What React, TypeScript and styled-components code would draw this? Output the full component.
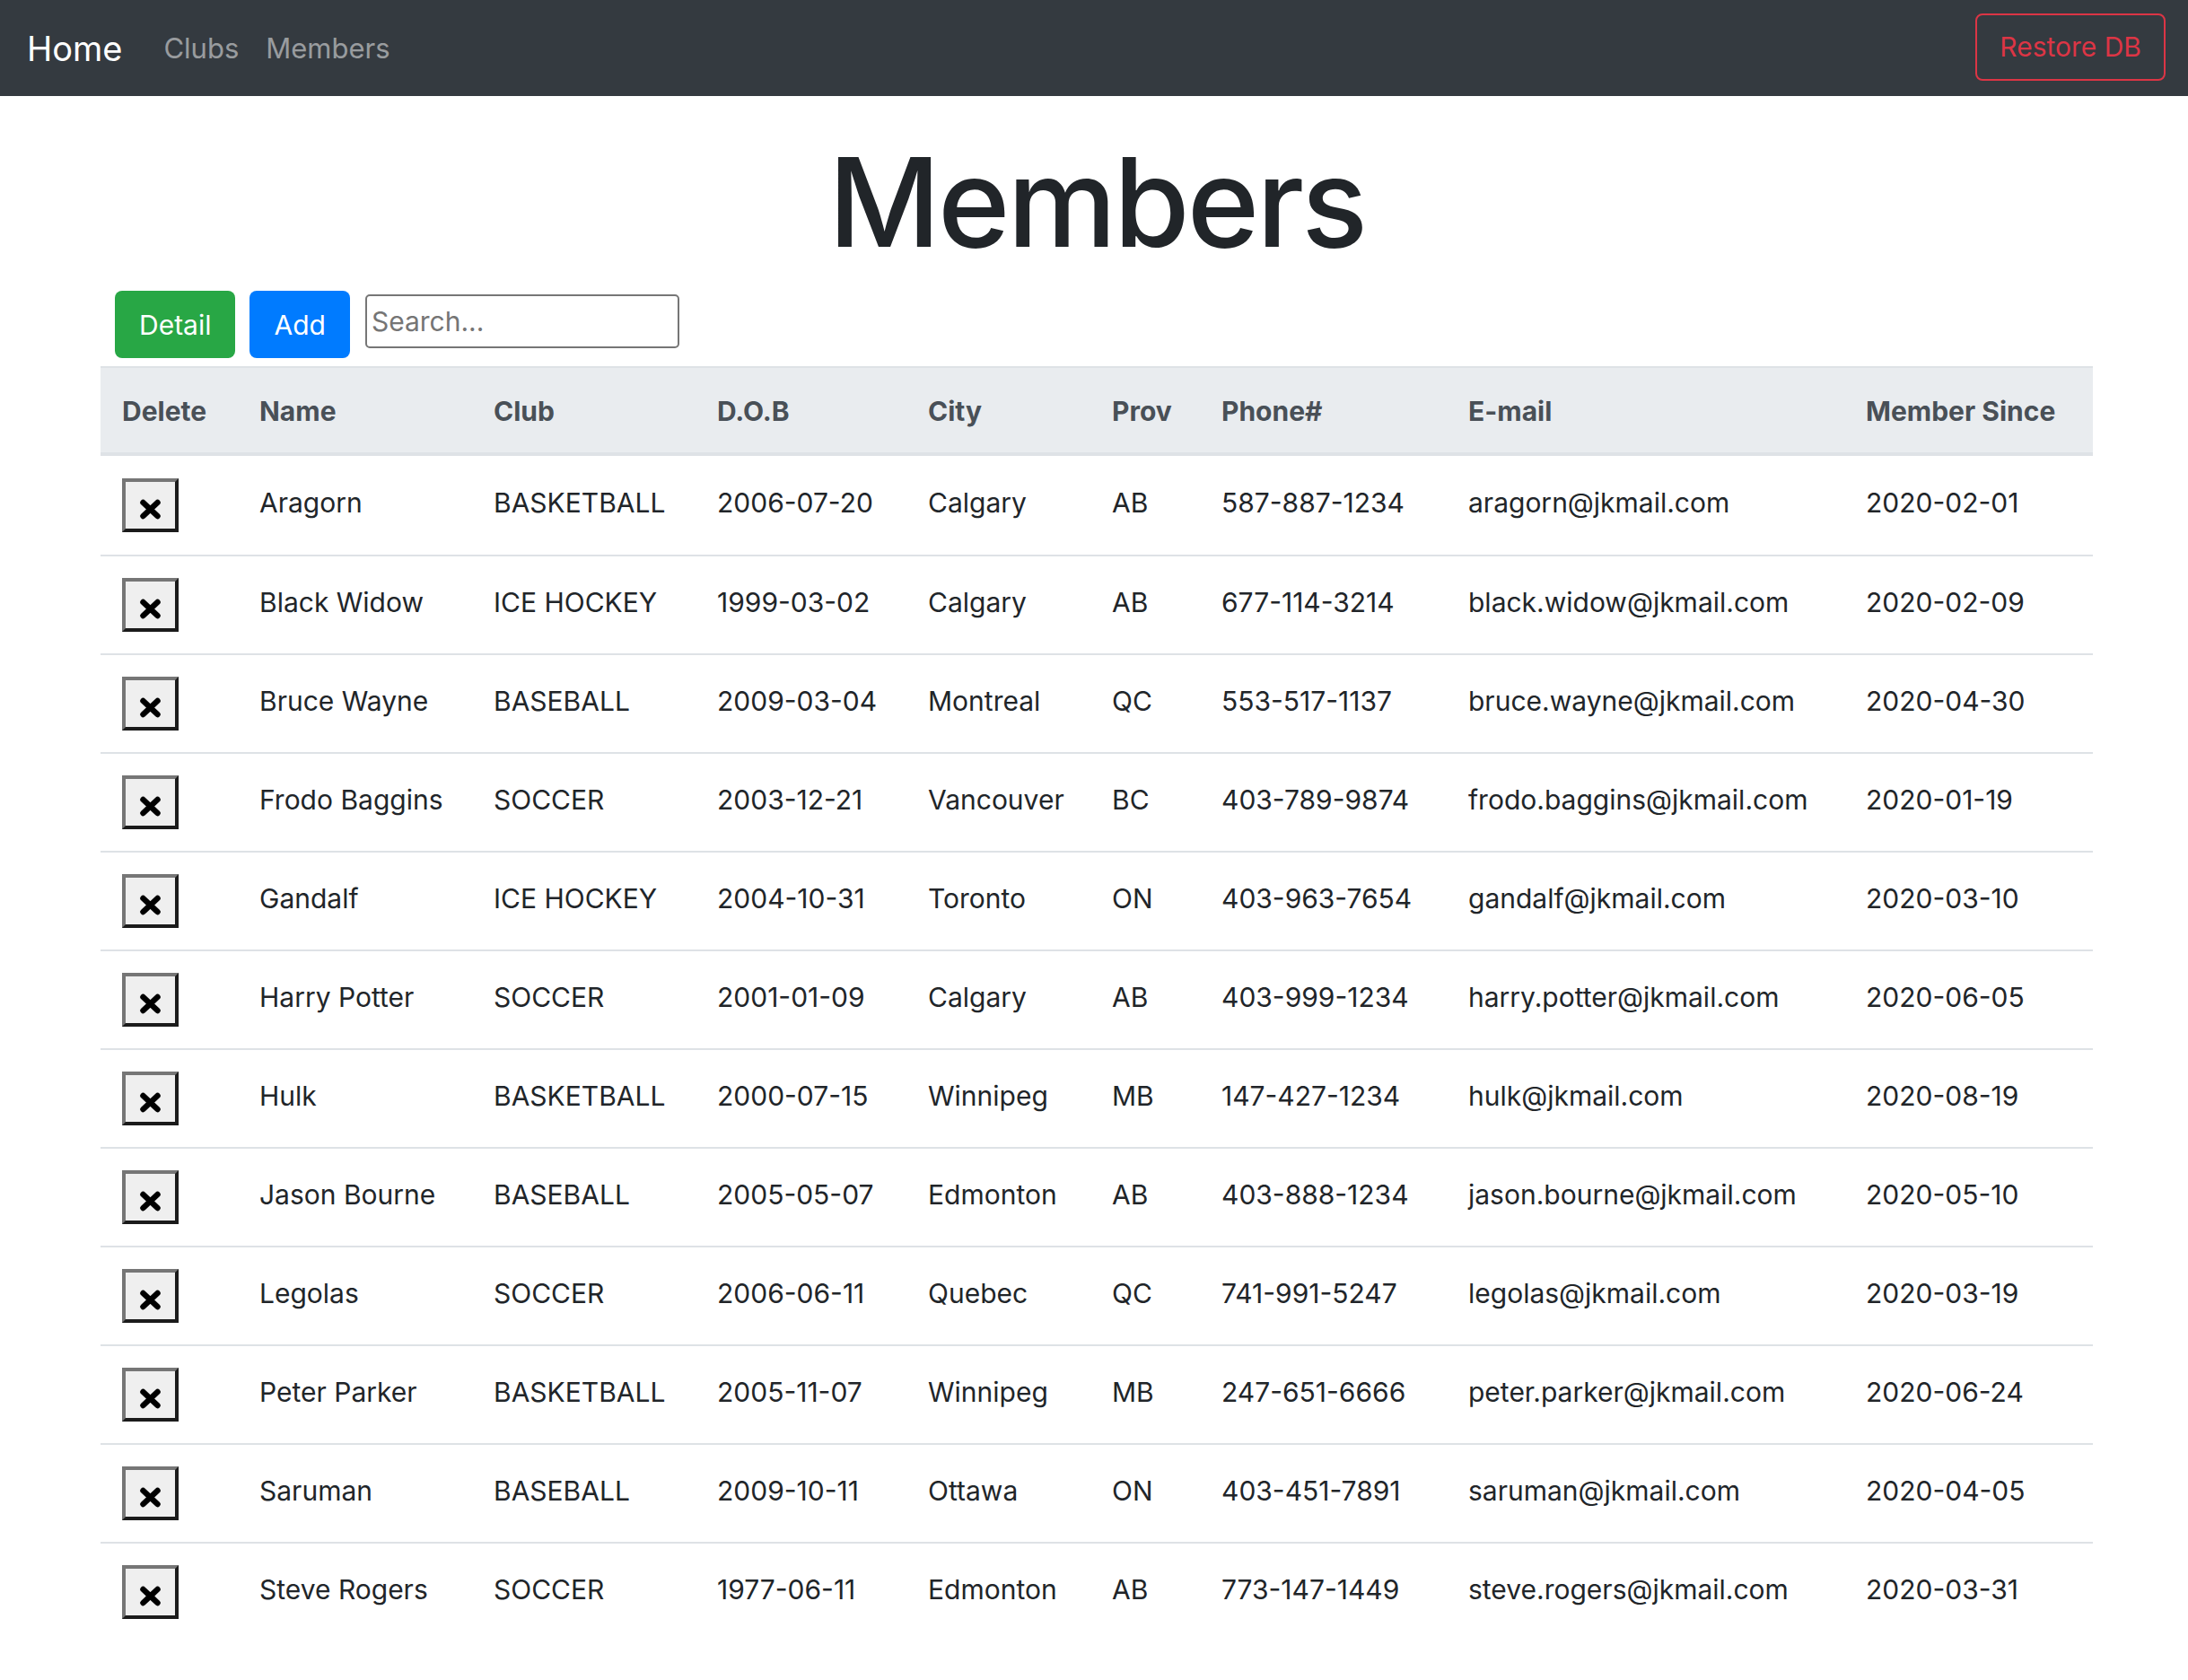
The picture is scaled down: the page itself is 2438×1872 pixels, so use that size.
import React from "react";
import styled, { createGlobalStyle } from "styled-components";

const GlobalStyle = createGlobalStyle`
  html, body {
    margin: 0;
    padding: 0;
    background: #ffffff;
  }
  body {
    font-family: Inter, "Noto Sans", "Liberation Sans", sans-serif;
    color: #212529;
    -webkit-font-smoothing: antialiased;
  }
  * { box-sizing: border-box; }
`;

const NavBar = styled.nav`
  height: 107px;
  background: #343a40;
  display: flex;
  align-items: center;
  padding: 0 25px 0 30px;
`;

const Brand = styled.a`
  font-size: 38px;
  color: #ffffff;
  text-decoration: none;
  margin-right: 31px;
  line-height: 1;
`;

const NavLink = styled.a`
  font-size: 31px;
  color: rgba(255, 255, 255, 0.5);
  text-decoration: none;
  padding: 0 15px;
  line-height: 1;
`;

const NavSpacer = styled.div`
  flex: 1;
`;

const OutlineDanger = styled.button`
  height: 75px;
  margin-top: -3px;
  padding: 0 25px;
  font-family: inherit;
  font-size: 30px;
  color: #dc3545;
  background: transparent;
  border: 2px solid #dc3545;
  border-radius: 8px;
`;

const Container = styled.main`
  width: 2220px;
  margin: 0 0 0 112px;
  padding-bottom: 42px;
`;

const Title = styled.h1`
  margin: 34px 0 15px;
  text-align: center;
  font-size: 137px;
  line-height: 168px;
  font-weight: 500;
  letter-spacing: -3px;
  color: #212529;
`;

const Toolbar = styled.div`
  display: flex;
  align-items: flex-start;
  padding-left: 16px;
  gap: 16px;
  margin-bottom: 9px;
`;

const ActionButton = styled.button<{ $bg: string }>`
  height: 75px;
  padding: 0 27px;
  font-family: inherit;
  font-size: 30px;
  color: #ffffff;
  background: ${(p) => p.$bg};
  border: none;
  border-radius: 8px;
`;

const SearchInput = styled.input`
  width: 350px;
  height: 60px;
  margin: 4px 0 0 1px;
  padding: 0 5px;
  font-family: inherit;
  font-size: 30px;
  color: #212529;
  border: 2px solid #767676;
  border-radius: 5px;
  outline: none;
  &::placeholder {
    color: #757575;
  }
`;

const Table = styled.table`
  width: 100%;
  table-layout: fixed;
  border-collapse: separate;
  border-spacing: 0;
  font-size: 30px;
`;

const HeadCell = styled.th`
  height: 100px;
  padding: 2px 24px 0;
  text-align: left;
  font-weight: 700;
  color: #495057;
  background: #e9ecef;
  border-top: 2px solid #dee2e6;
  border-bottom: 4px solid #dee2e6;
  vertical-align: middle;
  white-space: nowrap;
`;

const Cell = styled.td<{ $first: boolean; $control?: boolean }>`
  height: 110px;
  padding: ${(p) => (p.$control ? "0 24px" : "0 24px 6px")};
  color: #212529;
  border-top: ${(p) => (p.$first ? "none" : "2px solid #dee2e6")};
  vertical-align: middle;
  white-space: nowrap;
`;

const DeleteButton = styled.button`
  width: 63px;
  height: 60px;
  padding: 8px 0 0;
  display: flex;
  align-items: center;
  justify-content: center;
  background: #efefef;
  border-style: solid;
  border-width: 4px;
  border-color: #767676 #1b1b1b #1b1b1b #767676;
  border-radius: 0;
`;

const columns = [
  { label: "Delete", width: 153 },
  { label: "Name", width: 261 },
  { label: "Club", width: 249 },
  { label: "D.O.B", width: 235 },
  { label: "City", width: 205 },
  { label: "Prov", width: 122 },
  { label: "Phone#", width: 275 },
  { label: "E-mail", width: 443 },
  { label: "Member Since", width: 277 },
];

const members: string[][] = [
  ["Aragorn", "BASKETBALL", "2006-07-20", "Calgary", "AB", "587-887-1234", "aragorn@jkmail.com", "2020-02-01"],
  ["Black Widow", "ICE HOCKEY", "1999-03-02", "Calgary", "AB", "677-114-3214", "black.widow@jkmail.com", "2020-02-09"],
  ["Bruce Wayne", "BASEBALL", "2009-03-04", "Montreal", "QC", "553-517-1137", "bruce.wayne@jkmail.com", "2020-04-30"],
  ["Frodo Baggins", "SOCCER", "2003-12-21", "Vancouver", "BC", "403-789-9874", "frodo.baggins@jkmail.com", "2020-01-19"],
  ["Gandalf", "ICE HOCKEY", "2004-10-31", "Toronto", "ON", "403-963-7654", "gandalf@jkmail.com", "2020-03-10"],
  ["Harry Potter", "SOCCER", "2001-01-09", "Calgary", "AB", "403-999-1234", "harry.potter@jkmail.com", "2020-06-05"],
  ["Hulk", "BASKETBALL", "2000-07-15", "Winnipeg", "MB", "147-427-1234", "hulk@jkmail.com", "2020-08-19"],
  ["Jason Bourne", "BASEBALL", "2005-05-07", "Edmonton", "AB", "403-888-1234", "jason.bourne@jkmail.com", "2020-05-10"],
  ["Legolas", "SOCCER", "2006-06-11", "Quebec", "QC", "741-991-5247", "legolas@jkmail.com", "2020-03-19"],
  ["Peter Parker", "BASKETBALL", "2005-11-07", "Winnipeg", "MB", "247-651-6666", "peter.parker@jkmail.com", "2020-06-24"],
  ["Saruman", "BASEBALL", "2009-10-11", "Ottawa", "ON", "403-451-7891", "saruman@jkmail.com", "2020-04-05"],
  ["Steve Rogers", "SOCCER", "1977-06-11", "Edmonton", "AB", "773-147-1449", "steve.rogers@jkmail.com", "2020-03-31"],
];

const CrossIcon = () => (
  <svg width="25" height="23" viewBox="0 0 25 23" aria-hidden="true">
    <path d="M4.5 4 L20.5 19 M20.5 4 L4.5 19" stroke="#000" strokeWidth="6.5" strokeLinecap="round" fill="none" />
  </svg>
);

export default function App() {
  return (
    <>
      <GlobalStyle />
      <NavBar>
        <Brand href="#">Home</Brand>
        <NavLink href="#">Clubs</NavLink>
        <NavLink href="#">Members</NavLink>
        <NavSpacer />
        <OutlineDanger>Restore DB</OutlineDanger>
      </NavBar>
      <Container>
        <Title>Members</Title>
        <Toolbar>
          <ActionButton $bg="#28a745">Detail</ActionButton>
          <ActionButton $bg="#007bff">Add</ActionButton>
          <SearchInput placeholder="Search..." />
        </Toolbar>
        <Table>
          <colgroup>
            {columns.map((c) => (
              <col key={c.label} style={{ width: c.width }} />
            ))}
          </colgroup>
          <thead>
            <tr>
              {columns.map((c) => (
                <HeadCell key={c.label}>{c.label}</HeadCell>
              ))}
            </tr>
          </thead>
          <tbody>
            {members.map((m, i) => (
              <tr key={m[0]}>
                <Cell $first={i === 0} $control>
                  <DeleteButton aria-label="Delete">
                    <CrossIcon />
                  </DeleteButton>
                </Cell>
                {m.map((v, j) => (
                  <Cell key={j} $first={i === 0}>
                    {v}
                  </Cell>
                ))}
              </tr>
            ))}
          </tbody>
        </Table>
      </Container>
    </>
  );
}
